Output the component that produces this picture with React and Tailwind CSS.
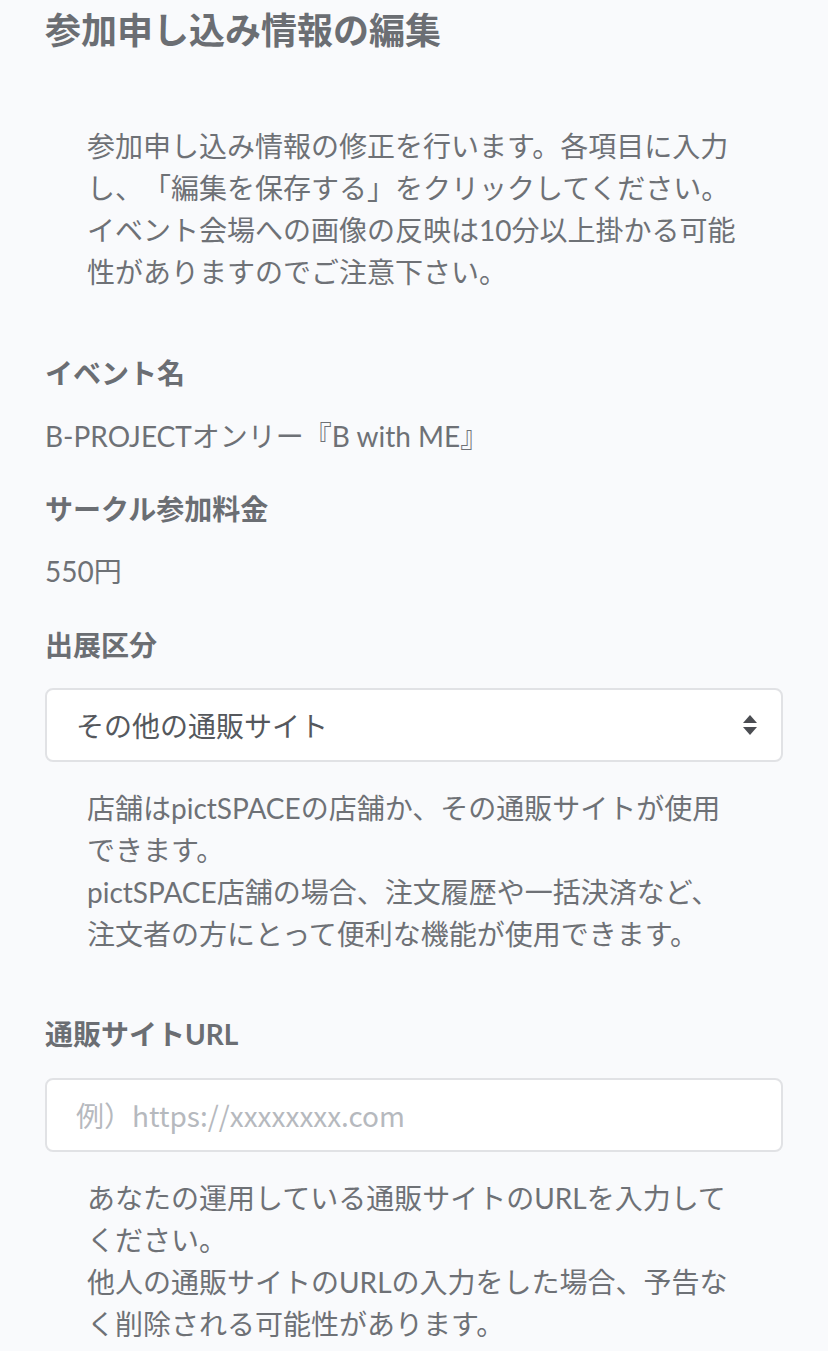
import { useState } from "react";

const font = {
  fontFamily: '"Lato", "Noto Sans CJK JP", sans-serif',
};

function SelectArrows() {
  return (
    <svg width="18" height="24" viewBox="0 0 18 24" className="shrink-0">
      <path d="M9 2 L16 10 L2 10 Z" fill="#4b4d52" />
      <path d="M9 22 L16 14 L2 14 Z" fill="#4b4d52" />
    </svg>
  );
}

export default function App() {
  const [shop, setShop] = useState("その他の通販サイト");
  const [url, setUrl] = useState("");

  return (
    <div
      className="min-h-[1351px] bg-[#f9fafc] px-[45px] pt-[3px] text-[#6e7176] [text-spacing-trim:space-all]"
      style={font}
    >
      <h1 className="text-[36px] font-bold leading-[54px] text-[#6b6e73]">
        参加申し込み情報の編集
      </h1>

      <p className="mt-[68px] px-[42px] text-[28px] leading-[42px]">
        参加申し込み情報の修正を行います。各項目に入力し、「編集を保存する」をクリックしてください。イベント会場への画像の反映は10分以上掛かる可能性がありますのでご注意下さい。
      </p>

      <div className="mt-[59px]">
        <h2 className="text-[28px] font-bold leading-[42px] text-[#6b6e73]">イベント名</h2>
        <p className="mt-[21px] text-[28px] leading-[42px]">B-PROJECTオンリー『B with ME』</p>
      </div>

      <div className="mt-[31px]">
        <h2 className="text-[28px] font-bold leading-[42px] text-[#6b6e73]">サークル参加料金</h2>
        <p className="mt-[20px] text-[28px] leading-[42px]">550円</p>
      </div>

      <div className="mt-[32px]">
        <h2 className="text-[28px] font-bold leading-[42px] text-[#6b6e73]">出展区分</h2>
        <div className="relative mt-[22px]">
          <select
            value={shop}
            onChange={(e) => setShop(e.target.value)}
            className="h-[74px] w-full appearance-none rounded-[8px] border-2 border-[#e1e2e5] bg-white pl-[29px] pr-[60px] text-[28px] text-[#55585d] outline-none"
            style={{ fontFamily: '"Noto Sans CJK JP", sans-serif' }}
          >
            <option>pictSPACEの店舗</option>
            <option>その他の通販サイト</option>
          </select>
          <div className="pointer-events-none absolute right-[24px] top-[25px]">
            <SelectArrows />
          </div>
        </div>
        <p className="mt-[25px] px-[42px] text-[28px] leading-[42px]">
          店舗はpictSPACEの店舗か、その通販サイトが使用できます。
          <br />
          pictSPACE店舗の場合、注文履歴や一括決済など、注文者の方にとって便利な機能が使用できます。
        </p>
      </div>

      <div className="mt-[58px] pb-[20px]">
        <h2 className="text-[28px] font-bold leading-[42px] text-[#6b6e73]">通販サイトURL</h2>
        <input
          value={url}
          onChange={(e) => setUrl(e.target.value)}
          placeholder="例）https://xxxxxxxx.com"
          className="mt-[23px] h-[74px] w-full rounded-[8px] border-2 border-[#e1e2e5] bg-white px-[29px] text-[28px] text-[#55585d] outline-none placeholder:text-[#b6b9be]"
          style={{ fontFamily: '"Noto Sans CJK JP", sans-serif' }}
        />
        <p className="mt-[25px] px-[42px] text-[28px] leading-[42px]">
          あなたの運用している通販サイトのURLを入力してください。
          <br />
          他人の通販サイトのURLの入力をした場合、予告なく削除される可能性があります。
        </p>
      </div>
    </div>
  );
}
